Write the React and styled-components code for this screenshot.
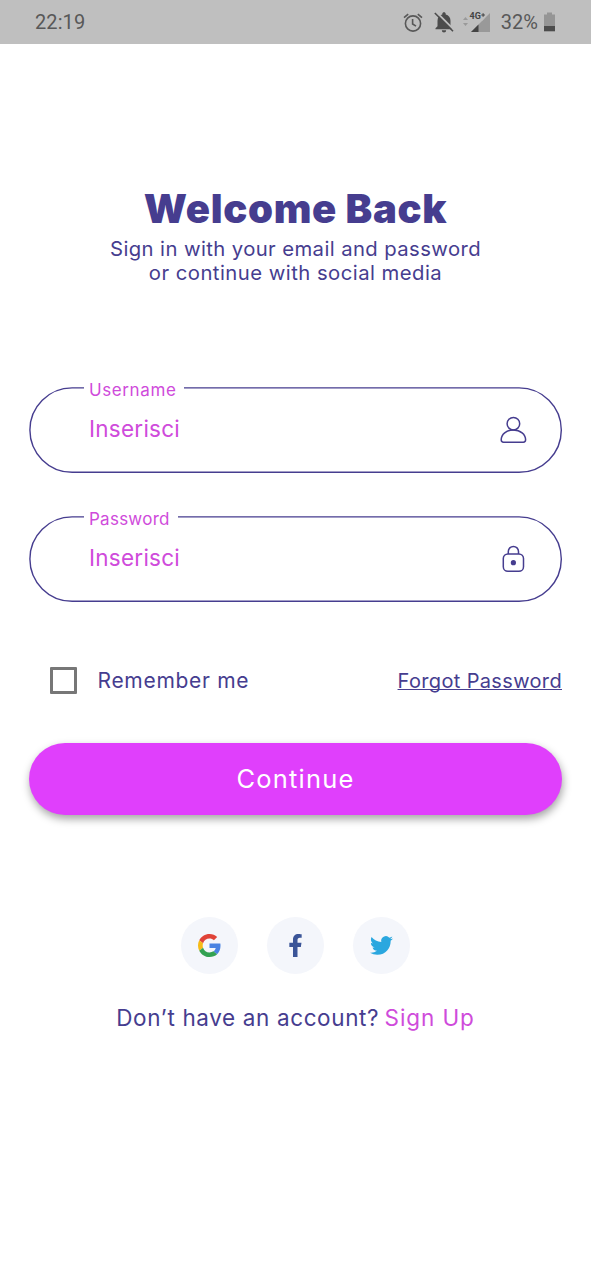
import React from "react";
import styled, { createGlobalStyle } from "styled-components";
import { FaFacebookF } from "react-icons/fa";

const navy = "#463d8f";
const pink = "#cf4bdb";

const GlobalStyle = createGlobalStyle`
  * { box-sizing: border-box; }
  body { margin: 0; background: #fff; font-family: Inter, sans-serif; }
`;

const Screen = styled.div`
  width: 100%;
  height: 1280px;
  display: flex;
  flex-direction: column;
  color: ${navy};
`;

const StatusBar = styled.header`
  height: 44px;
  flex: none;
  padding: 0 35px;
  display: flex;
  align-items: center;
  justify-content: space-between;
  background: #bfbfbf;
  color: #585858;
  font: 20px/44px Roboto, sans-serif;
`;

const Clock = styled.span`
  height: 44px;
  letter-spacing: 0.1px;
`;

const StatusIcons = styled.div`
  display: flex;
  align-items: center;
  height: 44px;
`;

const MutedBell = styled.svg`
  margin: 0 7px 0 9.5px;
`;

const Percent = styled.span`
  height: 44px;
  margin: 0 5px 0 10px;
`;

const Heading = styled.section`
  padding-top: 141px;
  text-align: center;
`;

const Title = styled.h1`
  margin: 0;
  font-size: 40px;
  font-weight: 900;
  line-height: 48px;
  letter-spacing: 0.65px;
`;

const Subtitle = styled.div`
  margin-top: 4px;
`;

const SubtitleLine = styled.p`
  margin: 0;
  font-size: 20.3px;
  line-height: 24px;
  letter-spacing: ${(p) => p.$tracking}px;
`;

const Form = styled.form`
  padding: 0 29px;
  display: flex;
  flex-direction: column;
`;

const Fields = styled.div`
  margin-top: 102px;
  display: flex;
  flex-direction: column;
  gap: 43.3px;
`;

const FieldBox = styled.div`
  position: relative;
  height: 86px;
  padding: 0 35px 0 62px;
  display: flex;
  align-items: center;
  justify-content: space-between;
  border-radius: 43px;
`;

const Outline = styled.svg`
  position: absolute;
  inset: 0;
`;

const FieldLabel = styled.label`
  position: absolute;
  left: 55px;
  top: -8px;
  width: ${(p) => p.$width}px;
  padding-left: 5px;
  background: #fff;
  color: ${pink};
  font-size: 17px;
  line-height: 22px;
  letter-spacing: ${(p) => p.$tracking}px;
`;

const Placeholder = styled.span`
  color: ${pink};
  font-size: 22.5px;
  line-height: 28px;
  letter-spacing: 0.25px;
  margin: 0 0 2.5px -2px;
`;

const Options = styled.div`
  margin-top: 64px;
  height: 28px;
  padding-left: 21px;
  display: flex;
  align-items: center;
`;

const Checkbox = styled.span`
  width: 27px;
  height: 27px;
  flex: none;
  border: 3px solid #777;
  border-radius: 1px;
`;

const Remember = styled.span`
  margin-left: 20.5px;
  font-size: 21px;
  letter-spacing: 0.7px;
`;

const Forgot = styled.a`
  margin-left: auto;
  font-size: 20px;
  line-height: 26px;
  letter-spacing: 0.35px;
  text-decoration: underline;
  text-decoration-thickness: 1px;
  text-underline-offset: 1px;
  text-decoration-skip-ink: none;
  padding-top: 1px;
`;

const Submit = styled.button`
  margin: 49px 0 0;
  height: 72px;
  padding: 0 0 1px;
  border: 0;
  border-radius: 36px;
  background: #e03ffc;
  color: #fff;
  font: 25.5px/71px Inter, sans-serif;
  letter-spacing: 1.2px;
  box-shadow: 1px 4px 8px rgba(0, 0, 0, 0.36);
`;

const Socials = styled.div`
  margin-top: 102px;
  display: flex;
  justify-content: center;
  gap: 29px;
`;

const SocialButton = styled.span`
  width: 57px;
  height: 57px;
  border-radius: 50%;
  background: #f4f6fb;
  display: flex;
  align-items: center;
  justify-content: center;
  color: ${(p) => p.$color};
`;

const Account = styled.p`
  margin: 28.5px 0 0;
  text-align: center;
  font-size: 22.5px;
  line-height: 30px;
  letter-spacing: 0.62px;
`;

const SignUp = styled.a`
  color: ${pink};
  letter-spacing: 0.9px;
  margin-left: -1.5px;
`;

const AlarmIcon = () => (
  <svg width="20" height="22" viewBox="0 0 20 22" fill="none" stroke="#585858" strokeWidth="1.6">
    <circle cx="10" cy="12.5" r="7.6" />
    <path d="M9.600 8v5l3.400 2.200M1 6.700l4.200-3.600M19 6.700l-4.200-3.600" />
  </svg>
);

const MutedBellIcon = () => (
  <MutedBell width="22" height="22" viewBox="0 0 22 22">
    <path
      fill="#4c4c4c"
      d="M11 1.200c1 0 1.700.7 1.700 1.700v.6c3 .7 4.800 3.200 4.800 6.300v5.400l2 2v1h-17v-1l2-2V9.800c0-3.100 1.800-5.600 4.800-6.300v-.6c0-1 .7-1.700 1.700-1.700zM8.800 19.200h4.400a2.200 2.200 0 0 1-4.400 0z"
    />
    <path d="M3.200 1 21.500 19.300" stroke="#bfbfbf" strokeWidth="1.800" />
    <path d="M1.800 2 20 20.200" stroke="#4c4c4c" strokeWidth="1.600" />
  </MutedBell>
);

const SignalIcon = () => (
  <svg width="29" height="22" viewBox="0 0 29 22">
    <path d="M3.500 6 6 9H1zM3.500 15 6 12H1z" fill="#999" />
    <path d="M28 2v19H9z" fill="#999" />
    <path d="M16.500 13.500V21H9z" fill="#444" />
    <path d="M6 0h17.500v6l-3.500 4H6z" fill="#bfbfbf" />
    <text x="7.500" y="8.300" fontFamily="Roboto, sans-serif" fontSize="9" fontWeight="700" fill="#444">
      4G
    </text>
    <path d="M19.300 4h3.600M21.100 2.200v3.600" stroke="#444" strokeWidth="1.100" />
  </svg>
);

const BatteryIcon = () => (
  <svg width="13" height="20" viewBox="0 0 13 20">
    <path d="M4 .5h5v2h3V14H1V2.500h3z" fill="#959595" />
    <path d="M1 14h11v5.300H1z" fill="#4c4c4c" />
  </svg>
);

const UserIcon = () => (
  <svg width="28" height="28" viewBox="0 0 28 28" fill="none" stroke={navy} strokeWidth="1.500">
    <circle cx="14.400" cy="7.700" r="6.300" />
    <path d="M14.400 14c-7 0-12.200 4.200-12.200 9.800 0 1.700.8 2.400 2.300 2.400h19.800c1.500 0 2.300-.7 2.300-2.400 0-5.600-5.200-9.800-12.200-9.800z" />
  </svg>
);

const LockIcon = () => (
  <svg width="28" height="28" viewBox="0 0 28 28" fill="none" stroke={navy} strokeWidth="1.500">
    <rect x="4.300" y="9" width="20.200" height="17.300" rx="4.600" />
    <path d="M9.300 9V6.500a5.100 5.100 0 0 1 10.200 0V9" />
    <circle cx="14.400" cy="17.700" r="2.600" fill={navy} stroke="none" />
  </svg>
);

const GoogleIcon = () => (
  <svg width="23" height="23" viewBox="0 0 48 48">
    <path fill="#e04338" d="M24 9.500c3.540 0 6.710 1.220 9.210 3.600l6.850-6.850C35.900 2.380 30.470 0 24 0 14.620 0 6.510 5.380 2.560 13.220l7.980 6.190C12.430 13.720 17.740 9.500 24 9.500z" />
    <path fill="#4a83e2" d="M46.980 24.550c0-1.570-.15-3.090-.38-4.550H24v9.020h12.940c-.58 2.960-2.260 5.480-4.780 7.180l7.730 6c4.510-4.180 7.090-10.360 7.090-17.650z" />
    <path fill="#f6bb16" d="M10.530 28.590c-.48-1.450-.76-2.990-.76-4.590s.27-3.140.76-4.590l-7.980-6.190C.92 16.460 0 20.120 0 24c0 3.880.92 7.540 2.560 10.780l7.970-6.190z" />
    <path fill="#33a252" d="M24 48c6.480 0 11.930-2.130 15.890-5.810l-7.730-6c-2.150 1.450-4.920 2.300-8.160 2.300-6.260 0-11.570-4.220-13.470-9.910l-7.980 6.190C6.510 42.620 14.620 48 24 48z" />
  </svg>
);

const TwitterIcon = () => (
  <svg width="23" height="23" viewBox="0 0 24 24" fill="currentColor">
    <path d="M23.953 4.570a10 10 0 0 1-2.825.775 4.958 4.958 0 0 0 2.163-2.723c-.951.555-2.005.959-3.127 1.184a4.920 4.920 0 0 0-8.384 4.482C7.690 8.095 4.067 6.130 1.640 3.162a4.822 4.822 0 0 0-.666 2.475c0 1.710.87 3.213 2.188 4.096a4.904 4.904 0 0 1-2.228-.616v.060a4.923 4.923 0 0 0 3.946 4.827 4.996 4.996 0 0 1-2.212.085 4.936 4.936 0 0 0 4.604 3.417 9.867 9.867 0 0 1-6.102 2.105c-.390 0-.779-.023-1.170-.067a13.995 13.995 0 0 0 7.557 2.209c9.053 0 13.998-7.496 13.998-13.985 0-.210 0-.420-.015-.630A9.935 9.935 0 0 0 24 4.590z" />
  </svg>
);

function Field({ label, width, tracking, children }) {
  return (
    <FieldBox>
      <Outline width="533" height="86" viewBox="0 0 533 86">
        <rect x="0.900" y="0.900" width="531.400" height="84.400" rx="42.200" fill="none" stroke={navy} strokeWidth="1.400" />
      </Outline>
      <FieldLabel $width={width} $tracking={tracking}>{label}</FieldLabel>
      <Placeholder>Inserisci</Placeholder>
      {children}
    </FieldBox>
  );
}

export default function App() {
  return (
    <Screen>
      <GlobalStyle />
      <StatusBar>
        <Clock>22:19</Clock>
        <StatusIcons>
          <AlarmIcon />
          <MutedBellIcon />
          <SignalIcon />
          <Percent>32%</Percent>
          <BatteryIcon />
        </StatusIcons>
      </StatusBar>
      <Heading>
        <Title>Welcome Back</Title>
        <Subtitle>
          <SubtitleLine $tracking={0.4}>Sign in with your email and password</SubtitleLine>
          <SubtitleLine $tracking={0.47}>or continue with social media</SubtitleLine>
        </Subtitle>
      </Heading>
      <Form>
        <Fields>
          <Field label="Username" width={100} tracking={0.6}><UserIcon /></Field>
          <Field label="Password" width={94} tracking={0.25}><LockIcon /></Field>
        </Fields>
        <Options>
          <Checkbox />
          <Remember>Remember me</Remember>
          <Forgot>Forgot Password</Forgot>
        </Options>
        <Submit type="button">Continue</Submit>
      </Form>
      <Socials>
        <SocialButton><GoogleIcon /></SocialButton>
        <SocialButton $color="#3b5598"><FaFacebookF size={23} /></SocialButton>
        <SocialButton $color="#2aa7df"><TwitterIcon /></SocialButton>
      </Socials>
      <Account>
        Don’t have an account? <SignUp>Sign Up</SignUp>
      </Account>
    </Screen>
  );
}
